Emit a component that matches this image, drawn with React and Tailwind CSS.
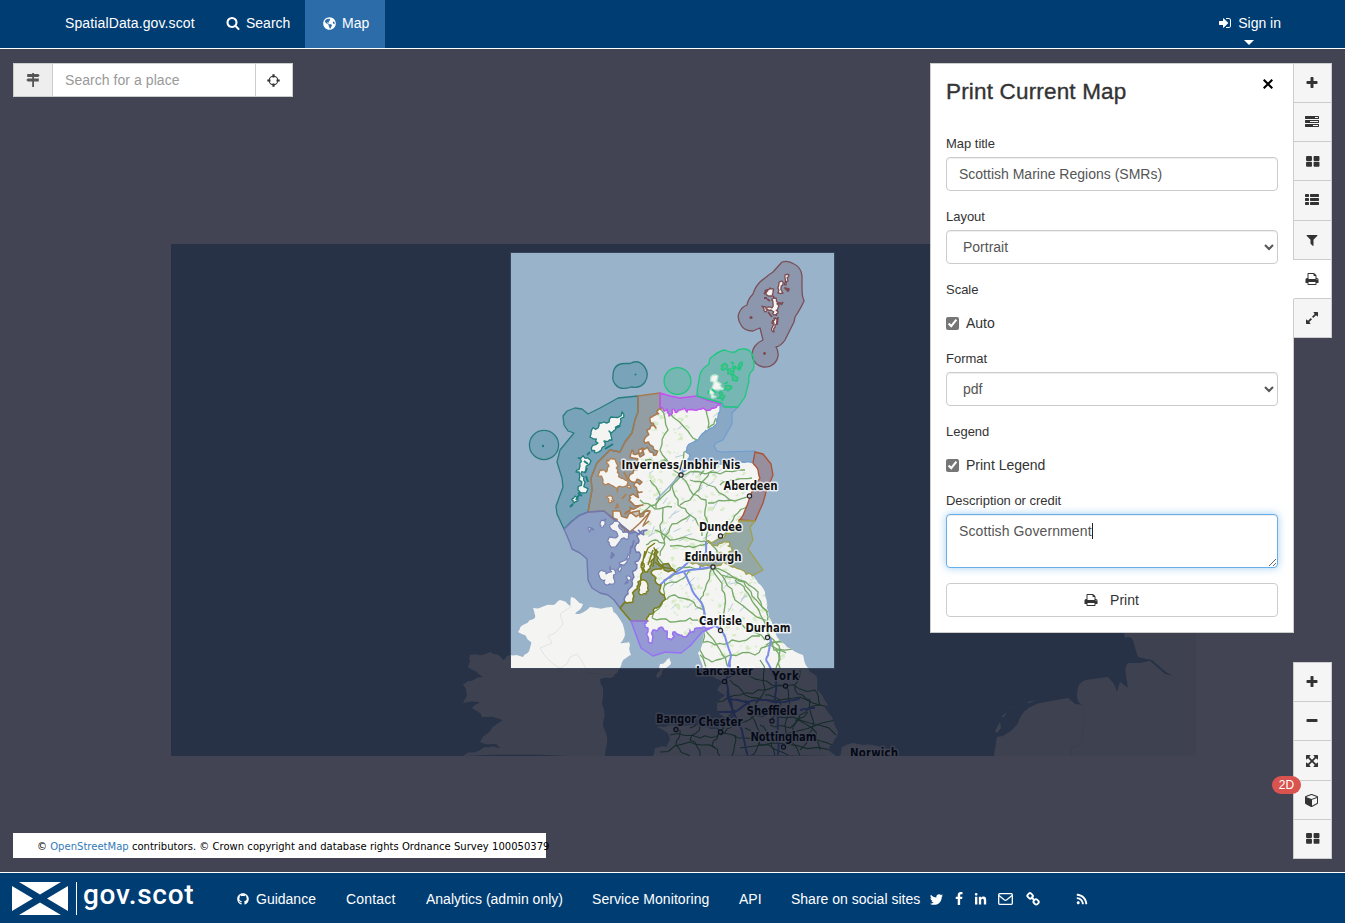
import React from "react";
import { FaGlobeAmericas, FaGithub, FaLinkedinIn, FaRss } from "react-icons/fa";

/* ---------- icons (1792 unit grid) ---------- */
const ICONS = {
  search: "M1216 832q0-185-131.5-316.5t-316.5-131.5-316.5 131.5-131.5 316.5 131.5 316.5 316.5 131.5 316.5-131.5 131.5-316.5zm512 832q0 52-38 90t-90 38q-54 0-90-38l-343-342q-179 124-399 124-143 0-273.5-55.5t-225-150-150-225-55.5-273.5 55.5-273.5 150-225 225-150 273.5-55.5 273.5 55.5 225 150 150 225 55.5 273.5q0 220-124 399l343 343q37 37 37 90z",
  signIn: "M1312 896q0 26-19 45l-544 544q-19 19-45 19t-45-19-19-45v-288h-448q-26 0-45-19t-19-45v-384q0-26 19-45t45-19h448v-288q0-26 19-45t45-19 45 19l544 544q19 19 19 45zm352-352v704q0 119-84.5 203.5t-203.5 84.5h-320q-13 0-22.5-9.5t-9.5-22.5q0-4-1-20t-.5-26.5 3-23.5 10-19.5 20.5-6.5h320q66 0 113-47t47-113v-704q0-66-47-113t-113-47h-312l-11.5-1-11.5-3-8-5.5-7-9-2-13.5q0-4-1-20t-.5-26.5 3-23.5 10-19.5 20.5-6.5h320q119 0 203.5 84.5t84.5 203.5z",
  plus: "M1600 736v192q0 40-28 68t-68 28h-416v416q0 40-28 68t-68 28h-192q-40 0-68-28t-28-68v-416h-416q-40 0-68-28t-28-68v-192q0-40 28-68t68-28h416v-416q0-40 28-68t68-28h192q40 0 68 28t28 68v416h416q40 0 68 28t28 68z",
  minus: "M1600 736v192q0 40-28 68t-68 28h-1216q-40 0-68-28t-28-68v-192q0-40 28-68t68-28h1216q40 0 68 28t28 68z",
  tasks: "M1024 1408h640v-128h-640v128zm-384-512h1024v-128h-1024v128zm640-512h384v-128h-384v128zm512 832v256q0 26-19 45t-45 19h-1664q-26 0-45-19t-19-45v-256q0-26 19-45t45-19h1664q26 0 45 19t19 45zm0-512v256q0 26-19 45t-45 19h-1664q-26 0-45-19t-19-45v-256q0-26 19-45t45-19h1664q26 0 45 19t19 45zm0-512v256q0 26-19 45t-45 19h-1664q-26 0-45-19t-19-45v-256q0-26 19-45t45-19h1664q26 0 45 19t19 45z",
  thLarge: "M832 1056v352q0 52-38 90t-90 38h-448q-52 0-90-38t-38-90v-352q0-52 38-90t90-38h448q52 0 90 38t38 90zm0-704v352q0 52-38 90t-90 38h-448q-52 0-90-38t-38-90v-352q0-52 38-90t90-38h448q52 0 90 38t38 90zm896 704v352q0 52-38 90t-90 38h-448q-52 0-90-38t-38-90v-352q0-52 38-90t90-38h448q52 0 90 38t38 90zm0-704v352q0 52-38 90t-90 38h-448q-52 0-90-38t-38-90v-352q0-52 38-90t90-38h448q52 0 90 38t38 90z",
  thList: "M512 1248v192q0 40-28 68t-68 28h-320q-40 0-68-28t-28-68v-192q0-40 28-68t68-28h320q40 0 68 28t28 68zm0-512v192q0 40-28 68t-68 28h-320q-40 0-68-28t-28-68v-192q0-40 28-68t68-28h320q40 0 68 28t28 68zm1280 512v192q0 40-28 68t-68 28h-960q-40 0-68-28t-28-68v-192q0-40 28-68t68-28h960q40 0 68 28t28 68zm-1280-1024v192q0 40-28 68t-68 28h-320q-40 0-68-28t-28-68v-192q0-40 28-68t68-28h320q40 0 68 28t28 68zm1280 512v192q0 40-28 68t-68 28h-960q-40 0-68-28t-28-68v-192q0-40 28-68t68-28h960q40 0 68 28t28 68zm0-512v192q0 40-28 68t-68 28h-960q-40 0-68-28t-28-68v-192q0-40 28-68t68-28h960q40 0 68 28t28 68z",
  filter: "M1595 295q17 41-14 70l-493 493v742q0 42-39 59-13 5-25 5-27 0-45-19l-256-256q-19-19-19-45v-486l-493-493q-31-29-14-70 17-39 59-39h1280q42 0 59 39z",
  print: "M448 1536h896v-256h-896v256zm0-640h896v-384h-160q-40 0-68-28t-28-68v-160h-640v640zm1152 64q0-26-19-45t-45-19-45 19-19 45 19 45 45 19 45-19 19-45zm128 0v416q0 13-9.5 22.5t-22.5 9.5h-224v160q0 40-28 68t-68 28h-960q-40 0-68-28t-28-68v-160h-224q-13 0-22.5-9.5t-9.5-22.5v-416q0-79 56.5-135.5t135.5-56.5h64v-544q0-40 28-68t68-28h672q40 0 88 20t76 48l152 152q28 28 48 76t20 88v256h64q79 0 135.5 56.5t56.5 135.5z",
  expand: "M883 1056q0 13-10 23l-332 332 144 144q19 19 19 45t-19 45-45 19h-448q-26 0-45-19t-19-45v-448q0-26 19-45t45-19 45 19l144 144 332-332q10-10 23-10t23 10l114 114q10 10 10 23zm781-864v448q0 26-19 45t-45 19-45-19l-144-144-332 332q-10 10-23 10t-23-10l-114-114q-10-10-10-23t10-23l332-332-144-144q-19-19-19-45t19-45 45-19h448q26 0 45 19t19 45z",
  arrows: "M1411 541l-355 355 355 355 144-144q29-31 70-14 39 17 39 59v448q0 26-19 45t-45 19h-448q-42 0-59-40-17-39 14-69l144-144-355-355-355 355 144 144q31 30 14 69-17 40-59 40h-448q-26 0-45-19t-19-45v-448q0-42 40-59 39-17 69 14l144 144 355-355-355-355-144 144q-19 19-45 19-12 0-24-5-40-17-40-59v-448q0-26 19-45t45-19h448q42 0 59 40 17 39-14 69l-144 144 355 355 355-355-144-144q-31-30-14-69 17-40 59-40h448q26 0 45 19t19 45v448q0 42-39 59-13 5-25 5-26 0-45-19z",
  cube: "M896 1629l640-349v-636l-640 233v752zm-64-865l698-254-698-254-698 254zm832-252v768q0 35-18 65t-49 47l-704 384q-28 16-61 16t-61-16l-704-384q-31-17-49-47t-18-65v-768q0-40 23-73t61-47l704-256q22-8 44-8t44 8l704 256q38 14 61 47t23 73z",
  twitter: "M1684 408q-67 98-162 167 1 14 1 42 0 130-38 259.5t-115.5 248.5-184.5 210.5-258 146-323 54.5q-271 0-496-145 35 4 78 4 225 0 401-138-105-2-188-64.5t-114-159.5q33 5 61 5 43 0 85-11-112-23-185.5-111.5t-73.5-205.5v-4q68 38 146 41-66-44-105-115t-39-154q0-88 44-163 121 149 294.5 238.5t371.5 99.5q-8-38-8-74 0-134 94.5-228.5t228.5-94.5q140 0 236 102 109-21 205-78-37 115-142 178 93-10 186-50z",
  facebook: "M1343 12v264h-157q-86 0-116 36t-30 108v189h293l-39 296h-254v759h-306v-759h-255v-296h255v-218q0-186 104-288.5t277-102.5q147 0 228 12z",
};

function Icon({ name, size = 14 }) {
  return (
    <svg width={size} height={size} viewBox="0 0 1792 1792" fill="currentColor" className="shrink-0">
      <path d={ICONS[name]} />
    </svg>
  );
}

const SignpostIcon = () => (
  <svg width="14" height="14" viewBox="0 0 14 14" fill="#555">
    <path d="M6.200 0h1.800v1h4.200l1.500 1.500L12.200 4H1.200V1h5zM1.800 5.500h11v3h-11L.3 7zM6.200 8.500H8V14H6.200zM6.200 3.500H8v3H6.200z" />
  </svg>
);

const CrosshairIcon = () => (
  <svg width="13" height="13" viewBox="0 0 13 13" fill="none" stroke="#333">
    <circle cx="6.500" cy="6.500" r="4.300" strokeWidth="1.100" />
    <path d="M6.500 .3v3.200M6.500 9.500v3.200M.3 6.500h3.200M9.500 6.500h3.200" strokeWidth="2.200" />
  </svg>
);

const CloseIcon = () => (
  <svg width="10" height="10" viewBox="0 0 10 10" fill="none" stroke="currentColor" strokeWidth="2.100">
    <path d="M.7 .7l8.600 8.600M9.300 .7L.7 9.300" />
  </svg>
);

const EnvelopeIcon = () => (
  <svg width="15" height="12" viewBox="0 0 15 12" fill="none" stroke="currentColor" strokeWidth="1.300">
    <rect x=".7" y=".7" width="13.600" height="10.600" rx="1" />
    <path d="M1 2.500l5.200 4.300q1.300 1 2.600 0L14 2.500" />
  </svg>
);

const ChainIcon = () => (
  <svg width="14" height="14" viewBox="0 0 14 14" fill="none" stroke="currentColor" strokeWidth="1.900">
    <rect x="-2.200" y="-2.200" width="5" height="4.600" rx="1.600" transform="translate(4 3.600) rotate(45)" />
    <rect x="-2.600" y="-2.400" width="5" height="4.600" rx="1.600" transform="translate(10.100 10) rotate(45)" />
    <path d="M5.200 5l3.600 3.700" />
  </svg>
);

/* ---------- map geometry ---------- */
const rng = (seed) => () => {
  seed = (seed * 1664525 + 1013904223) % 4294967296;
  return seed / 4294967296;
};

// Midpoint displacement gives coasts and roads their natural irregularity.
function rough(points, amount, seed = 1, depth = 2, closed = false) {
  const r = rng(seed);
  let pts = closed ? [...points, points[0]] : points;
  for (let d = 0; d < depth; d++) {
    const next = [pts[0]];
    for (let i = 1; i < pts.length; i++) {
      const [ax, ay] = pts[i - 1];
      const [bx, by] = pts[i];
      const len = Math.hypot(bx - ax, by - ay);
      const k = (r() - 0.5) * amount * Math.min(len, 14);
      const n = len || 1;
      next.push([(ax + bx) / 2 - ((by - ay) / n) * k, (ay + by) / 2 + ((bx - ax) / n) * k], [bx, by]);
    }
    pts = next;
  }
  return pts;
}
const P = (s) => s.trim().split(/\s+/).map((p) => p.split(",").map(Number));
const D = (pts, close) => "M" + pts.map((p) => p[0].toFixed(1) + " " + p[1].toFixed(1)).join("L") + (close ? "Z" : "");

const northCoast = rough(P("660,407 664,411 667,409 669,416 672,410 675,412 680,410 687,412 694,410 703,408 712,408 720,405"), 0.9, 4);
const morayCoast = rough(P("720,408 718,416 717,423 708,430 698,440 687,447 686,452 690,455 688,459 684,463 690,459 682,468 680,474 690,468 700,463 715,465 735,462 753,463"), 0.3, 5);
const grampianCoast = rough(P("753,463 758,470 760,478 755,488 750,496 746,508 739,521"), 0.15, 6);
const forthCoast = rough(P("739,521 733,532 724,538 710,543 706,541 712,545 722,543 730,542 728,546 733,550 728,555 713,556 704,560 690,558 684,560 696,563 710,566 723,562 732,567 742,570 752,575"), 0.5, 7);
const eastEngland = rough(P("752,575 758,583 765,592 767,608 773,625 777,637 787,647 803,655 808,668 810,672 817,677 817,690 828,705 823,706 832,717 838,732 833,743 828,750 836,756 653,756 655,748 667,747 670,740 668,733 657,727 673,725 697,725 716,729 723,725 727,718 718,712 717,702 725,695 717,690 723,682 708,673 703,667 698,653 703,642 705,632 713,627"), 0.16, 8);
const solwayCoast = rough(P("713,627 704,626 698,628 694,632 690,630 686,637 680,635 676,633 673,632 671,640 667,636 663,628 658,630 653,630 652,643 648,637 645,627 647,621"), 0.7, 9);
const clydeCoast = rough(P("647,621 652,614 657,608 664,595 661,585 656,578 653,570 663,566 676,572 664,564 657,560 658,552 654,548 652,560 650,566 645,572 642,562 643,572 638,582 635,590 633,602 625,602"), 0.7, 10);
const argyllCoast = rough(P("625,602 628,594 632,586 634,577 637,568 635,562 639,552 636,545 639,540 647,530 638,535 630,532"), 0.8, 11);
const westCoast = rough(P("630,532 622,527 613,518 627,518 640,517 650,511 640,514 625,514 630,507 643,505 629,500 633,494 642,492 634,486 642,482 632,482 633,473 640,466 632,468 633,458 632,450 637,454 643,448 640,457 650,452 656,455 650,445 645,438 647,430 656,428 650,420 655,415 658,410 660,407"), 1.1, 12);

const mainland = [...northCoast, ...morayCoast, ...grampianCoast, ...forthCoast, ...eastEngland, ...solwayCoast, ...clydeCoast, ...argyllCoast, ...westCoast];

const isle = (s, seed, amt = 0.9) => D(rough(P(s), amt, seed, 2, true), true);
const lewis = isle("622,412 621,422 616,427 609,431 612,440 604,441 605,446 596,453 592,451 598,443 592,438 591,432 598,428 604,422 611,417", 21);
const uist = isle("578,458 588,458 586,470 582,476 585,482 582,493 578,490 579,480 576,472 580,466", 22);
const barra = isle("575,496 578,499 574,503 572,500", 23);
const skye = isle("600,470 606,472 609,466 607,460 612,459 618,466 619,474 625,480 631,488 622,487 617,492 611,485 603,480", 24);
const rum = isle("607,498 611,496 614,501 610,503", 25);
const mull = isle("612,524 617,521 622,530 630,532 629,538 620,541 609,544 608,540 618,536 612,530", 26);
const coll = isle("600,524 606,519 605,523 601,527", 27);
const tiree = isle("588,529 592,528 594,530 589,532", 28);
const jura = isle("628,554 627,562 620,572 617,570 619,563", 29);
const islay = isle("602,570 606,574 610,566 616,574 615,582 608,585 605,580 600,578", 30);
const arran = isle("640,581 644,580 648,586 646,594 641,595 639,588", 31, 0.4);
const gigha = isle("626,577 629,576 628,583 625,584", 32);

const shetlandIsles = [
  isle("785,275 789,275 788,281 786,285 784,284", 41, 0.5),
  isle("779,283 782,281 781,288 783,293 778,293", 42, 0.5),
  isle("766,293 770,288 773,291 770,296", 43),
  isle("762,306 766,309 770,307 773,303 773,296 776,298 777,304 781,303 778,308 778,313 774,315 771,310 765,312", 44, 0.9),
  isle("774,318 777,319 775,325 774,332 772,331 774,324", 45, 0.8),
];
const orkneyIsles = [
  isle("711,377 718,376 721,384 724,389 717,390 712,388", 51),
  isle("709,391 714,393 716,397 712,398", 52),
  isle("722,365 726,364 725,369 721,369", 53),
  isle("727,370 734,371 731,375 728,374", 54),
  isle("732,376 737,377 736,381 732,380", 55),
  isle("739,364 742,362 741,368 738,370", 56),
  isle("725,386 732,388 728,391 724,390", 57),
  isle("719,393 725,396 723,400 720,398", 58),
  isle("733,366 737,368 734,370", 59),
];

const ireland = D(rough(P("510,655 523,657 530,648 531,642 518,632 525,624 535,618 533,608 553,605 560,600 570,606 571,597 583,604 575,614 590,607 612,607 617,615 625,635 620,643 629,642 631,655 626,658 620,668 613,677 600,679 603,697 603,723 607,737 605,756 463,756 485,747 500,748 496,744 480,742 484,736 503,720 482,717 472,708 480,702 463,703 467,695 463,685 483,677 468,667 470,655 490,652 503,660"), 0.3, 61, 2, true), true);
const man = isle("670,658 670,665 658,678 656,676 660,664", 62, 0.4);
const norfolk = isle("842,747 853,743 873,745 897,750 899,757 840,757", 63, 0.15);
const continent = "M994 756L997 737L1003 736Q1014 730 1018 723Q1022 708 1040 703L1068 698L1075 704L1083 705Q1077 703 1077 695Q1077 682 1086 680L1108 677L1114 684L1117 692L1120 682L1128 688L1126 675Q1124 663 1130 663L1140 663L1150 661L1165 674L1173 676L1166 672L1152 660Q1141 658 1138 657Q1135 648 1133 640Q1130 635 1125 638L1124 633L930 620L1124 600H1196V756ZM995 731l5-9 1 6-4 5zM1001 717l6-5-3 5zM1010 708l13-4-12 4zM1027 702l10-2-8 3zM1044 699l6-3-4 2z";

/* regional boundaries */
const hebWestLine = "638,396 618,398 611,402 600,408 588,414 582,409 575,408 567,411 563,416 564,425 568,431 574,433 560,450 557,462 562,478 563,487 556,506 557,514 564,529";
const hebEast = P("588,512 592,490 591,478 597,463 602,458 610,450 620,452 625,442 632,433 635,420 638,412 638,396");
const hebrides = D([...P(hebWestLine), ...P("572,521 580,515"), ...hebEast], true);
const highlands = D([...P("638,396 660,393"), ...[...westCoast].reverse(), ...P("613,519 604,511 588,512"), ...hebEast], true);
const argyll = D([...P("564,529 570,543 572,549 580,553 587,559 588,580 592,588 600,593 608,595 614,600 620,608"), ...argyllCoast, ...P("613,518 604,511 588,512 578,516")], true);
const clyde = D([...P("620,608 631,621 648,621"), ...clydeCoast, [620, 608]], true);
const solway = D([...P("631,621 635,632 641,648 653,656 665,652 681,653 690,646 702,632"), ...solwayCoast], true);
const north = D([...P("660,393 670,396 680,398 697,396 707,400 721,404"), ...[...northCoast].reverse()], true);
const moray = D([...P("720,406 738,407 732,413 732,424 723,440 716,443 714,446 717,451 722,452 755,451"), ...[...morayCoast].reverse()], true);
const northEast = D([...P("755,452 763,454 771,464 773,475 766,492 763,503 755,521 739,520"), ...[...grampianCoast].reverse()], true);
const forth = D([...P("739,521 755,521 750,527 753,540 748,549 756,560 763,570 752,576"), ...[...forthCoast].reverse()], true);
const shetland = "M782 262Q788 260 794 264Q801 267 802 276V290Q802 296 804 301Q801 308 795 317L794 322Q788 334 785 340Q781 346 776 347A13 13 0 1 1 755 346Q758 342 763 340L760 328Q757 329 753 331Q744 331 741 325Q736 317 740 311Q742 307 747 305Q748 299 753 294Q755 287 760 282Q767 276 773 272Z";
const orkney = "M697 396Q697 388 699 380Q699 370 709 364Q709 358 713 356Q719 351 725 350Q731 353 735 352Q739 348 745 349Q751 350 753 356Q755 364 753 370Q748 374 749 381L745 397L738 407H724L722 403Z";

const greenRoads = [
  "680,474 700,472 720,474 745,470", "680,474 672,486 678,505 690,515 702,536", "680,474 690,490 706,500 707,520 706,540", "750,496 730,500 708,503",
  "750,496 745,508 733,520 722,536", "660,408 668,430 660,450 675,466", "706,410 708,428 716,418", "706,430 695,441 684,452 680,470", "680,474 665,460 655,462 645,460",
  "655,530 670,540 690,539 705,541", "640,515 655,505 670,490 680,474", "640,500 655,509 672,507", "650,480 660,495 656,508", "663,507 660,525 664,540 660,556",
  "680,505 690,500 706,478 714,470", "670,546 685,547 700,545 708,543", "706,541 715,548 722,558", "676,570 690,567 712,567", "712,567 725,580 735,600 765,620 770,637",
  "712,567 722,590 725,605 721,630", "712,567 705,590 700,600 704,615", "712,567 740,580 758,592 766,610 770,637", "735,580 745,590 755,605 766,625", "676,574 664,580 663,598 652,618",
  "664,600 675,595 690,600 704,610", "652,618 670,622 690,618 700,622", "664,586 680,580 690,570", "700,640 715,645 732,640 760,636", "704,632 700,650 712,662 730,655 755,655 770,645 800,652",
  "770,637 780,650 776,668", "770,645 790,640", "730,620 745,628 765,640", "690,515 672,524 664,540", "720,485 735,480 752,478", "690,480 708,485 730,500", "700,475 712,463",
  "660,408 685,428 697,440", "646,545 655,540 664,543", "648,552 660,560 675,570", "700,655 706,668 715,672", "776,650 780,668", "705,630 720,650 728,668",
  "770,640 774,650 786,653", "766,645 780,641", "722,575 744,582 752,596 768,612",
];
const dimRoads = [
  "725,682 740,672 760,680 785,686 815,690", "730,680 745,695 770,700 800,697 825,706", "717,702 740,695 765,690 785,686", "720,735 735,725 755,715 772,712 800,720 836,735",
  "690,728 705,722 720,730 745,738 780,735 835,720", "680,730 676,745 690,756", "700,725 690,740 700,756", "720,732 712,745 720,756", "735,735 732,756", "745,728 760,745 790,756",
  "785,686 790,705 785,725 800,756", "800,670 795,690 810,700 812,730 800,750", "760,660 765,690 750,715 760,740 750,756", "785,742 810,735 832,745", "740,748 785,744 830,750", "670,735 700,738 720,733",
  "815,690 820,705 800,715 790,740", "735,710 725,718 720,732", "765,695 780,700 772,718", "770,725 790,728 808,712", "745,700 752,710 770,712", "795,720 812,728 820,750", "660,752 690,742 715,748", "775,756 770,735 760,725",
];
const blueRoads = [
  "676,574 690,570 712,567", "684,572 692,590 702,604 705,620 722,631", "706,541 706,552 703,560", "660,585 676,572 690,560", "722,631 731,655 730,668", "730,660 726,680 728,698 742,730 748,756",
  "771,638 769,650 766,660", "766,660 776,680 775,700 778,715 778,756", "728,698 745,702 760,700 785,702 800,698", "718,712 735,712 750,702", "800,710 815,708", "728,690 734,715 722,728", "706,552 699,570",
];

// Scattered woodland patches and short streams inside the mainland.
const r0 = rng(77);
const woods = Array.from({ length: 620 }, () => {
  const x = 638 + r0() * 170;
  const y = 410 + r0() * 250;
  const a = 0.8 + r0() * 2.2;
  return D(rough([[x - a, y], [x, y - a * 0.7], [x + a, y], [x, y + a * 0.7]], 1.4, Math.floor(x * y), 1, true), true);
}).join("");
const streams = Array.from({ length: 60 }, () => {
  const x = 645 + r0() * 105;
  const y = 412 + r0() * 200;
  return "M" + x.toFixed(1) + " " + y.toFixed(1) + "l" + (3 + r0() * 6).toFixed(1) + " " + (-2 - r0() * 7).toFixed(1);
}).join("");

const cities = [
  ["Inverness/Inbhir Nis", 681, 469, 681, 475, 119], ["Aberdeen", 750.5, 490.5, 749.5, 496, 54], ["Dundee", 720.5, 531, 720.5, 536, 43], ["Edinburgh", 713, 561, 713, 567, 57],
  ["Carlisle", 720.5, 625, 720.5, 630.5, 43], ["Durham", 768, 632, 767.5, 637.5, 45], ["Lancaster", 724.5, 675.5, 724.5, 681.5, 57], ["York", 785.5, 680.5, 785.5, 686, 27],
  ["Sheffield", 772, 715, 772, 721, 51], ["Bangor", 676, 723.5, 676, 729.5, 40], ["Chester", 720.5, 726, 720.5, 732, 44], ["Nottingham", 783.5, 741, 783.5, 747, 66], ["Norwich", 874, 757.5, 874, 770, 48],
];

function MapCanvas() {
  return (
    <svg className="absolute inset-0" width="1345" height="823" viewBox="0 49 1345 823" fill="none">
      <defs>
        <clipPath id="extent"><rect x="171" y="244" width="1025" height="512" /></clipPath>
        <clipPath id="land"><path d={D(mainland, true)} /></clipPath>
      </defs>
      <g clipPath="url(#extent)" strokeLinejoin="round">
        <rect x="171" y="244" width="1025" height="512" fill="#99b3cb" />
        <g fill="#f4f4f2">
          <path d={D(mainland, true)} />
          <path d={ireland} />
          <path d={man} />
          <path d={norfolk} />
          <path d={continent} />
        </g>
        <path d="M572 606L560 614 563 624 555 633 548 636 552 643 540 648 545 656 553 664 560 668 567 664 570 657 577 654 582 661 588 673 612 675M1083 705L1084 722 1081 745 1071 748V756" stroke="#e4e4e2" strokeWidth="1" />
        <g clipPath="url(#land)">
          <path d={woods} fill="#d6ebc6" />
          <path d={streams} stroke="#a9c4d6" strokeWidth=".8" />
          {greenRoads.map((s, i) => <path key={s} d={D(rough(P(s), 0.35, 90 + i))} stroke="#75a968" strokeWidth="1.300" />)}
          {dimRoads.map((s, i) => <path key={s} d={D(rough(P(s), 0.4, 190 + i))} stroke="#4f9058" strokeWidth="1.100" />)}
          {blueRoads.map((s, i) => <path key={s} d={D(rough(P(s), 0.15, 290 + i))} stroke="#7b8eea" strokeWidth="2" />)}
          <path d="M682 473L668 488 656 500" stroke="#94b2cc" strokeWidth="1.500" />
        </g>

        <path d={hebrides} fill="#2d7f93" fillOpacity=".3" stroke="#2b7c80" strokeWidth="1.300" />
        <circle cx="544" cy="445" r="14.600" fill="#2d7f93" fillOpacity=".3" stroke="#2b7c80" strokeWidth="1.300" />
        <path d="M613 376Q613 364 624 363.500H630Q638 359 644 366Q650 374 645 382Q640 389 631 387Q620 391 615 384Q612 380 613 376Z" fill="#2d7f93" fillOpacity=".3" stroke="#2b7c80" strokeWidth="1.300" />
        <path d={highlands} fill="#8a816e" fillOpacity=".42" stroke="#a9794e" strokeWidth="1.500" />
        <path d={argyll} fill="#6e77b3" fillOpacity=".32" stroke="#7078ae" strokeWidth="1.400" />
        <path d={clyde} fill="#747b4c" fillOpacity=".42" stroke="#7b7d16" strokeWidth="1.500" />
        <path d={solway} fill="#9070e4" fillOpacity=".36" stroke="#9672f2" strokeWidth="1.500" />
        <path d={moray} fill="#5d8dbb" fillOpacity=".26" stroke="#6f9dcd" strokeWidth="1.200" />
        <path d={north} fill="#a468df" fillOpacity=".45" stroke="#c253ee" strokeWidth="1.400" />
        <path d={northEast} fill="#955b5b" fillOpacity=".4" stroke="#ae5130" strokeWidth="1.300" />
        <path d={forth} fill="#8b9561" fillOpacity=".36" stroke="#9fa152" strokeWidth="1.300" />
        <path d={shetland} fill="#745c72" fillOpacity=".32" stroke="#7a5058" strokeWidth="1.300" />
        <path d={orkney} fill="#38bf88" fillOpacity=".36" stroke="#20c77e" strokeWidth="1.300" />
        <circle cx="677.500" cy="381" r="13.400" fill="#38bf88" fillOpacity=".36" stroke="#20c77e" strokeWidth="1.300" />

        <g fill="#f4f4f2" strokeWidth="1.300">
          {[lewis, uist, barra].map((d) => <path key={d} d={d} stroke="#1e7f7d" />)}
          <path d="M584 461l4 3M587 468l-2 5M586 476l2 6M570 507l3-3M576 500l3-5M578 493l4 3M605 449l8-5M615 428l5-2M587 455l3-3" stroke="#1e7f7d" strokeWidth="2" />
          {[skye, rum].map((d) => <path key={d} d={d} stroke="#b08052" />)}
          <path d="M624 472l4 8M626 494l-4 5M615 508l4-2M616 505l2-1M620 462l3 6" stroke="#b08052" strokeWidth="2" />
          <path d="M630 532l10-9 10-11-7 14 6-5" stroke="#a9794e" strokeWidth="1.500" fill="none" />
          <g stroke="#767db5" strokeWidth="1.100">
            {[mull, coll, tiree, jura, islay, gigha].map((d) => <path key={d} d={d} />)}
          </g>
          <path d="M612 553l-1 5 3-3zM634 540l-2 8M631 546l-1 8M628 534l8-2M638 530l6 5" stroke="#767db5" strokeWidth="1.800" />
          <path d={arran} stroke="#7b7d16" />
          <path d="M644 558l4-10 7-5M648 565l5-15M653 567l2-14M642 566l3-15M655 562l6 5 12 2" stroke="#7b7d16" strokeWidth="1.500" fill="none" />
          {shetlandIsles.map((d) => <path key={d} d={d} stroke="#7c4b50" />)}
          <path d="M785 288l4 1-1 2zM767 298l-3 0M764 294l4-4M783 302l-2 3M768 312l4 5M778 317l-1 8M770 301l-3-2M773 320l-1 4" stroke="#7c4b50" strokeWidth="1.800" />
          {orkneyIsles.map((d, i) => <path key={d} d={d} stroke={i < 2 ? "#b8e8d0" : "#20c77e"} fill={i < 2 ? "#f4f4f2" : "#58bb94"} />)}
          <path d="M712 389l4 4M709 390l-1 4M724 384l4-2M717 398l3 0M731 362l3 2" stroke="#20c77e" strokeWidth="1.600" />
        </g>
        <g fill="#7c4b50"><circle cx="751" cy="317.500" r="1.600" /><circle cx="764.500" cy="353.500" r="1.400" /></g>
        <g fill="#26797d"><circle cx="543" cy="446" r="1.200" /><circle cx="635.500" cy="374.500" r="1" /></g>

        <g fontFamily="'DejaVu Sans Condensed', 'DejaVu Sans', sans-serif" fontStretch="condensed" fontWeight="bold" fontSize="11.500" textAnchor="middle">
          {cities.map(([name, x, y, cx, cy, w]) => (
            <g key={name}>
              <circle cx={cx} cy={cy} r="2.100" stroke="#26282c" strokeWidth="1.200" fill="#ddd" />
              <text x={x} y={y - 0.3} textLength={w} fill="#111" stroke="#fff" strokeOpacity=".75" strokeWidth="3" paintOrder="stroke">{name}</text>
            </g>
          ))}
        </g>
      </g>
      <path d="M171 244H1196V756H171ZM511 253V668H834V253Z" fillRule="evenodd" fill="rgba(2,7,25,.75)" />
      <rect x="510.500" y="252.500" width="324" height="416" stroke="#3f4c63" strokeOpacity=".7" />
    </svg>
  );
}

/* ---------- chrome ---------- */
function ToolButton({ icon, active, size = 14 }) {
  return (
    <button className={"flex flex-1 w-full items-center justify-center border-b border-[#ccc] pr-px text-[#333] " + (active ? "bg-white" : "bg-[#f5f5f5]")}>
      <Icon name={icon} size={size} />
    </button>
  );
}

const field = "block w-full h-[34px] rounded-[4px] border border-[#ccc] bg-white px-3 text-[14px] text-[#555] shadow-[inset_0_1px_1px_rgba(0,0,0,0.075)] outline-none";
const label = "block h-[18px] mb-[5px] text-[13px] leading-[20px] tracking-[-0.02px] text-[#333]";

function PrintPanel() {
  return (
    <section className="relative z-10 h-[570px] w-[364px] border border-[#ccc] bg-white px-[15px] text-[#333]">
      <div className="flex h-[70px] justify-between pt-[15px]">
        <h2 className="text-[22.500px] leading-[26px] tracking-[0.17px] [-webkit-text-stroke:0.35px_#333]">Print Current Map</h2>
        <button className="mr-[5px] flex h-[12px] text-black"><CloseIcon /></button>
      </div>
      <label className={label}>Map title</label>
      <input className={field} defaultValue="Scottish Marine Regions (SMRs)" />
      <label className={label + " mt-4"}>Layout</label>
      <select className={field}><option>Portrait</option></select>
      <label className={label + " mt-4"}>Scale</label>
      <div className="mt-[15px] flex h-5 items-center gap-[7px] text-[14px]">
        <input type="checkbox" defaultChecked className="size-[13px] accent-[#767676]" />Auto
      </div>
      <label className={label + " mt-4"}>Format</label>
      <select className={field}><option>pdf</option></select>
      <label className={label + " mt-4"}>Legend</label>
      <div className="mt-[15px] flex h-5 items-center gap-[7px] text-[14px]">
        <input type="checkbox" defaultChecked className="size-[13px] accent-[#767676]" />Print Legend
      </div>
      <label className={label + " mt-4"}>Description or credit</label>
      <div className="relative">
        <textarea
          className="block h-[54px] w-full rounded-[4px] border border-[#66afe9] bg-white px-3 py-[6px] text-[14px] leading-5 tracking-[0.1px] text-[#555] shadow-[inset_0_1px_1px_rgba(0,0,0,0.075),0_0_8px_rgba(102,175,233,0.6)] outline-none"
          defaultValue="Scottish Government"
        />
        <span className="absolute left-[146px] top-[9px] h-4 w-px bg-[#222]" />
      </div>
      <button className="mt-[15px] flex h-[34px] w-full items-center justify-center gap-3 rounded-[4px] border border-[#ccc] bg-white pr-px text-[14px]">
        <Icon name="print" size={14} />Print
      </button>
    </section>
  );
}

export default function App() {
  return (
    <div className="flex h-screen w-full flex-col overflow-hidden bg-[#434453] font-['Liberation_Sans',Arial,sans-serif] text-[14px] leading-5">
      <header className="flex h-[49px] shrink-0 justify-between border-b border-white bg-[#003d73] text-white">
        <nav className="flex pl-[50px]">
          <a className="flex w-[161px] items-center pb-[2px] pl-[15px] tracking-[0.12px]">SpatialData.gov.scot</a>
          <a className="flex w-[94px] items-center gap-[6px] pb-[2px] pl-[15px]"><Icon name="search" size={14} />Search</a>
          <a className="flex w-[80px] items-center gap-[6px] bg-[#2b6ca9] pb-[2px] pl-[18px]"><FaGlobeAmericas size={13} />Map</a>
        </nav>
        <div className="relative mr-[64px] flex items-center gap-[6px] pb-[2px]">
          <Icon name="signIn" size={14} />Sign in
          <span className="absolute bottom-[3px] left-[26px] border-x-[5px] border-t-[5px] border-x-transparent border-t-white" />
        </div>
      </header>

      <main className="relative flex flex-1 justify-between px-[13px] pb-[13px] pt-[14px]">
        <MapCanvas />
        <div className="relative flex flex-col justify-between pb-px">
          <div className="flex h-[34px] w-[280px] border border-[#ccc] bg-white">
            <span className="flex w-[39px] items-center justify-center border-r border-[#ccc] bg-[#eee]"><SignpostIcon /></span>
            <input className="w-[203px] border-r border-[#ccc] px-3 text-[14px] tracking-[0.05px] outline-none placeholder:text-[#999]" placeholder="Search for a place" />
            <button className="flex flex-1 items-center justify-center pr-px"><CrosshairIcon /></button>
          </div>
          <div className="flex h-[25px] w-[533px] items-center whitespace-nowrap bg-white pl-6 pt-[2px] font-['DejaVu_Sans',sans-serif] text-[10px] tracking-[0.02px] text-black">
            <span>© <a className="text-[#337ab7]">OpenStreetMap</a> contributors. © Crown copyright and database rights Ordnance Survey 100050379</span>
          </div>
        </div>

        <div className="relative flex">
          <PrintPanel />
          <div className="-ml-px flex w-[39px] flex-col justify-between">
            <div className="z-20 flex h-[275px] flex-col border-t border-r border-[#ccc]">
              <div className="flex flex-[5] flex-col border-l border-[#ccc]">
                <ToolButton icon="plus" />
                <ToolButton icon="tasks" />
                <ToolButton icon="thLarge" size={15} />
                <ToolButton icon="thList" />
                <ToolButton icon="filter" />
              </div>
              <div className="flex flex-1 pl-px bg-white"><ToolButton icon="print" active /></div>
              <div className="flex flex-1 border-l border-[#ccc]"><ToolButton icon="expand" /></div>
            </div>
            <div className="relative flex h-[197px] flex-col border-l border-r border-t border-[#ccc]">
              <ToolButton icon="plus" />
              <ToolButton icon="minus" />
              <ToolButton icon="arrows" />
              <ToolButton icon="cube" />
              <ToolButton icon="thLarge" size={15} />
              <span className="absolute left-[-22px] top-[113px] flex h-[18px] w-[29px] items-center justify-center rounded-full bg-[#d9534f] text-[12px] text-white">2D</span>
            </div>
          </div>
        </div>
      </main>

      <footer className="flex h-[51px] shrink-0 items-center border-t border-white bg-[#003d73] text-white">
        <div className="flex w-[237px] items-center pl-3">
          <svg width="56" height="33" viewBox="0 0 56 33" fill="#fff">
            <path d="M7 0H49L28 12.500ZM7 33H49L28 20.500ZM0 4L21 16.500 0 29ZM56 4L35 16.500 56 29Z" />
          </svg>
          <span className="ml-2 h-[33px] w-px bg-white" />
          <span className="ml-[6px] mt-[-7px] font-['Roboto',sans-serif] text-[28px] font-medium leading-8 tracking-[0.7px]">gov.scot</span>
        </div>
        <nav className="flex items-center pb-px pt-[3px]">
          <a className="flex w-[109px] items-center gap-[7px]"><FaGithub size={12} />Guidance</a>
          <a className="w-[80px] tracking-[0.2px]">Contact</a>
          <a className="w-[166px]">Analytics (admin only)</a>
          <a className="w-[147px] tracking-[0.08px]">Service Monitoring</a>
          <a className="w-[52px]">API</a>
          <a className="w-[138px]">Share on social sites</a>
          <a className="w-[23px]"><Icon name="twitter" size={15} /></a>
          <a className="w-[22px]"><Icon name="facebook" size={14} /></a>
          <a className="w-[24px]"><FaLinkedinIn size={13} /></a>
          <a className="w-[28px]"><EnvelopeIcon /></a>
          <a className="w-[50px]"><ChainIcon /></a>
          <a><FaRss size={12} /></a>
        </nav>
      </footer>
    </div>
  );
}
